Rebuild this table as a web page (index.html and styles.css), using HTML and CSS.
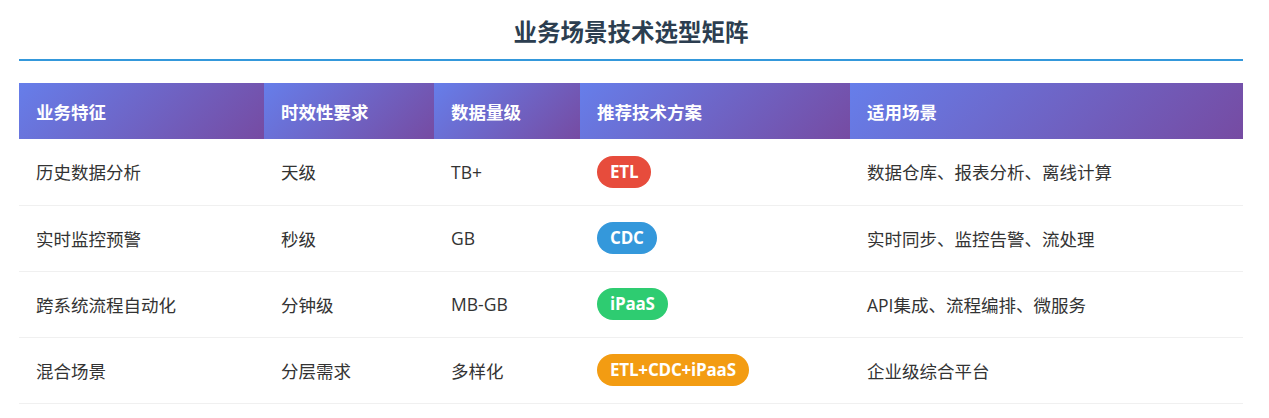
FILE: index.html
```html
<!DOCTYPE html>
<html lang="zh-CN">
<head>
<meta charset="utf-8">
<title>业务场景技术选型矩阵</title>
<link rel="stylesheet" href="styles.css">
</head>
<body>
<div class="container">
  <h1 class="title">业务场景技术选型矩阵</h1>
  <table class="matrix">
    <colgroup>
      <col class="c1"><col class="c2"><col class="c3"><col class="c4"><col class="c5">
    </colgroup>
    <thead>
      <tr>
        <th>业务特征</th>
        <th>时效性要求</th>
        <th>数据量级</th>
        <th>推荐技术方案</th>
        <th>适用场景</th>
      </tr>
    </thead>
    <tbody>
      <tr>
        <td>历史数据分析</td>
        <td>天级</td>
        <td>TB+</td>
        <td><span class="badge etl">ETL</span></td>
        <td>数据仓库、报表分析、离线计算</td>
      </tr>
      <tr>
        <td>实时监控预警</td>
        <td>秒级</td>
        <td>GB</td>
        <td><span class="badge cdc">CDC</span></td>
        <td>实时同步、监控告警、流处理</td>
      </tr>
      <tr>
        <td>跨系统流程自动化</td>
        <td>分钟级</td>
        <td>MB-GB</td>
        <td><span class="badge ipaas">iPaaS</span></td>
        <td>API集成、流程编排、微服务</td>
      </tr>
      <tr>
        <td>混合场景</td>
        <td>分层需求</td>
        <td>多样化</td>
        <td><span class="badge mixed">ETL+CDC+iPaaS</span></td>
        <td>企业级综合平台</td>
      </tr>
    </tbody>
  </table>
</div>
</body>
</html>
```

FILE: styles.css
```css
* { box-sizing: border-box; }

body {
  margin: 0;
  padding: 0;
  background: #ffffff;
  font-family: "Open Sans", "Noto Sans CJK SC", sans-serif;
  color: #333333;
}

.container {
  width: 1224px;
  margin-left: 19px;
}

.title {
  margin: 0;
  padding: 16px 0 11px;
  font-size: 23.5px;
  line-height: 32px;
  font-weight: 700;
  color: #2c3e50;
  text-align: center;
  border-bottom: 2px solid #3498db;
}

.matrix {
  width: 1224px;
  margin-top: 22px;
  border-collapse: collapse;
  table-layout: fixed;
}

.c1 { width: 245px; }
.c2 { width: 170px; }
.c3 { width: 146px; }
.c4 { width: 270px; }
.c5 { width: 393px; }

.matrix th {
  height: 56px;
  padding: 0 17px;
  text-align: left;
  font-size: 17.5px;
  font-weight: 700;
  color: #ffffff;
  background: linear-gradient(135deg, #667eea 0%, #764ba2 100%);
}

.matrix td {
  height: 66px;
  padding: 0 17px;
  font-size: 17.5px;
  color: #333333;
  border-bottom: 1px solid #f0f0f0;
  vertical-align: middle;
}

.badge {
  display: inline-block;
  height: 32px;
  line-height: 32px;
  padding: 0 13px;
  border-radius: 16px;
  font-size: 17px;
  font-weight: 700;
  letter-spacing: -0.2px;
  color: #ffffff;
}

.etl { background: #e74c3c; }
.cdc { background: #3498db; }
.ipaas { background: #2ecc71; }
.mixed { background: #f39c12; }
```
